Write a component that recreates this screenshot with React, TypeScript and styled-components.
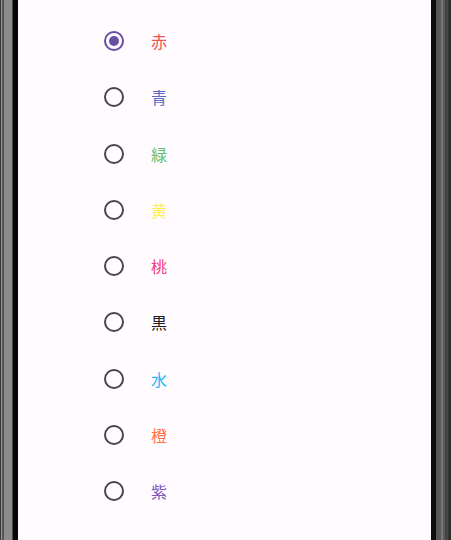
import { FC, useState } from "react";
import styled, { createGlobalStyle } from "styled-components";

const GlobalStyle = createGlobalStyle`
  html, body {
    margin: 0;
    padding: 0;
    height: 100%;
    background: #1a1a1a;
  }
  #root {
    height: 100%;
  }
`;

const Device = styled.div`
  display: flex;
  width: 451px;
  height: 540px;
  overflow: hidden;
`;

const LeftBezel = styled.div`
  width: 18px;
  flex-shrink: 0;
  background: linear-gradient(
    to right,
    #333 0px,
    #3a3a3a 1px,
    #9a9a9a 1px,
    #9a9a9a 2px,
    #555 2px,
    #555 4px,
    #8c8c8c 4px,
    #8c8c8c 12px,
    #4a4a4a 12px,
    #4a4a4a 13px,
    #050505 13px,
    #050505 18px
  );
`;

const RightBezel = styled.div`
  width: 20px;
  flex-shrink: 0;
  background: linear-gradient(
    to right,
    #0d0d0d 0px,
    #0d0d0d 5px,
    #555 5px,
    #5a5a5a 10px,
    #777 10px,
    #777 12px,
    #5c5c5c 12px,
    #5c5c5c 14px,
    #3e3e3e 14px,
    #4a4a4a 17px,
    #333 17px,
    #2a2a2a 20px
  );
`;

const Screen = styled.div`
  flex: 1;
  background: #fffbfe;
  padding-top: 13px;
  display: flex;
  flex-direction: column;
`;

const Row = styled.label`
  display: flex;
  align-items: center;
  height: 56.25px;
  padding-left: 86px;
  cursor: pointer;
`;

const RadioBox = styled.span`
  width: 20px;
  height: 20px;
  display: flex;
  align-items: center;
  justify-content: center;
`;

const ColorName = styled.span<{ $color: string }>`
  margin-left: 27px;
  font-family: "Noto Sans CJK JP", "Noto Sans", sans-serif;
  font-size: 16px;
  line-height: 24px;
  color: ${({ $color }) => $color};
`;

const colors = [
  { name: "赤", color: "#ef5350" },
  { name: "青", color: "#5c6bc0" },
  { name: "緑", color: "#66bb6a" },
  { name: "黄", color: "#ffee58" },
  { name: "桃", color: "#ec407a" },
  { name: "黒", color: "#212121" },
  { name: "水", color: "#29b6f6" },
  { name: "橙", color: "#ff7043" },
  { name: "紫", color: "#7e57c2" },
];

const Radio: FC<{ checked: boolean }> = ({ checked }) => (
  <RadioBox>
    <svg width="20" height="20" viewBox="0 0 20 20">
      <circle
        cx="10"
        cy="10"
        r="9"
        fill="none"
        stroke={checked ? "#6750a4" : "#49454f"}
        strokeWidth="2"
      />
      {checked && <circle cx="10" cy="10" r="5" fill="#6750a4" />}
    </svg>
  </RadioBox>
);

const App: FC = () => {
  const [selected, setSelected] = useState(0);

  return (
    <>
      <GlobalStyle />
      <Device>
        <LeftBezel />
        <Screen>
          {colors.map((c, i) => (
            <Row key={c.name} onClick={() => setSelected(i)}>
              <Radio checked={selected === i} />
              <ColorName $color={c.color}>{c.name}</ColorName>
            </Row>
          ))}
        </Screen>
        <RightBezel />
      </Device>
    </>
  );
};

export default App;
